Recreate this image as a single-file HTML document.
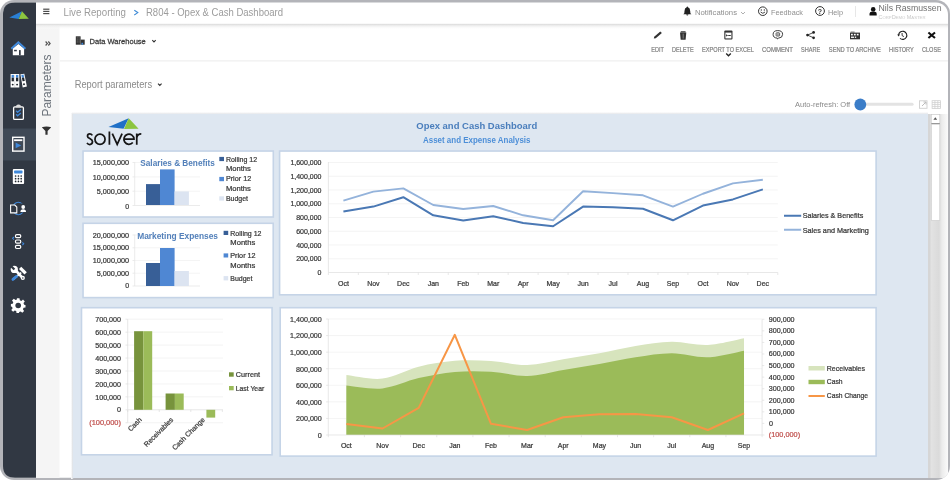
<!DOCTYPE html>
<html><head><meta charset="utf-8">
<style>
html,body{margin:0;padding:0;width:950px;height:480px;overflow:hidden;background:#fff;}
svg{display:block;font-family:"Liberation Sans",sans-serif;will-change:transform;}
</style></head>
<body>
<svg width="950" height="480" viewBox="0 0 950 480">
<defs>
  <clipPath id="frame"><rect x="0" y="0" width="950" height="480" rx="14" ry="14"/></clipPath>
  <linearGradient id="hdrsh" x1="0" y1="0" x2="0" y2="1">
    <stop offset="0" stop-color="#dadada"/><stop offset="0.25" stop-color="#ececec"/><stop offset="1" stop-color="#ffffff" stop-opacity="0"/>
  </linearGradient>
  <linearGradient id="sbg" x1="0" y1="0" x2="1" y2="0">
    <stop offset="0" stop-color="#e6e6e6"/><stop offset="0.55" stop-color="#dadada"/><stop offset="0.7" stop-color="#ececec"/><stop offset="1" stop-color="#fafafa"/>
  </linearGradient>
  <linearGradient id="shl" x1="0" y1="0" x2="1" y2="0">
    <stop offset="0" stop-color="#ffffff"/><stop offset="1" stop-color="#d5d9de"/>
  </linearGradient>
  <linearGradient id="sht" x1="0" y1="0" x2="0" y2="1">
    <stop offset="0" stop-color="#ffffff"/><stop offset="1" stop-color="#e3e5e8"/>
  </linearGradient>
  <linearGradient id="hdrup" x1="0" y1="0" x2="0" y2="1">
    <stop offset="0" stop-color="#ffffff" stop-opacity="0"/><stop offset="1" stop-color="#ececec"/>
  </linearGradient>
</defs>
<g clip-path="url(#frame)">
  <!-- frame bg -->
  <rect x="0" y="0" width="950" height="480" fill="#b3b4b9"/>
  <rect x="3" y="2.5" width="945" height="475.2" rx="12" ry="12" fill="#ffffff"/>
  <!-- sidebar -->
  <path d="M3 14.5 Q3 2.5 15 2.5 L36 2.5 L36 477.7 L15 477.7 Q3 477.7 3 465.7 Z" fill="#313843"/>
  <rect x="3" y="128.5" width="33" height="32" fill="#3f4956"/>

  <!-- params panel -->
  <rect x="36" y="24" width="23.5" height="454" fill="#f5f5f5"/>
  <!-- sidebar icons -->
  <path d="M9.3 17.4 L22 11.2 L18.7 18.9 Z" fill="#2a7fd4"/>
  <path d="M22 11.2 L28.8 18.8 L18.7 18.9 Z" fill="#8cc63f"/>
  <!-- home -->
  <path d="M12.8 48.6 L18.35 44 L24.1 48.6 L24.1 55.2 L12.8 55.2 Z" fill="#ffffff"/>
  <path d="M11.3 48.8 L18.35 42.2 L25.4 48.8" fill="none" stroke="#3f88da" stroke-width="1.9"/>
  <rect x="14.1" y="49.8" width="2.7" height="1.5" fill="#313843"/>
  <rect x="19" y="50.1" width="1.7" height="5.1" fill="#313843"/>
  <!-- binders -->
  <g>
    <rect x="10.6" y="74" width="8.7" height="13.5" fill="#ffffff"/>
    <rect x="14.75" y="75" width="0.35" height="12" fill="#9aa0a6"/>
    <path d="M20.4 74.3 L24.3 73.8 L26.9 86.6 L22.7 87.4 Z" fill="#ffffff"/>
    <rect x="11.6" y="74.9" width="2.3" height="2.8" fill="#3f88da"/>
    <rect x="16" y="74.9" width="2.3" height="2.8" fill="#3f88da"/>
    <path d="M21.3 74.9 L23.5 74.6 L24.1 77.4 L21.9 77.7 Z" fill="#3f88da"/>
    <rect x="11.6" y="77.7" width="2.3" height="3.6" fill="#1f252d"/>
    <rect x="16" y="77.7" width="2.3" height="3.6" fill="#1f252d"/>
    <path d="M21.9 77.7 L24.1 77.4 L24.8 80.9 L22.6 81.2 Z" fill="#1f252d"/>
    <circle cx="12.7" cy="84.6" r="0.95" fill="#1f252d"/>
    <circle cx="17.1" cy="84.6" r="0.95" fill="#1f252d"/>
    <circle cx="24" cy="84.2" r="0.95" fill="#1f252d"/>
  </g>
  <!-- clipboard -->
  <rect x="13.6" y="106.8" width="9.8" height="12.6" rx="1.2" fill="none" stroke="#ffffff" stroke-width="1.3"/>
  <path d="M15.6 107.6 Q15.6 105 18.5 104.6 Q21.4 105 21.4 107.6 Z" fill="#dddddd"/>
  <path d="M16.2 110.8 L17.6 112.3 L20.8 109.4 M16.2 114.3 L17.6 115.8 L20.8 112.9" fill="none" stroke="#3f88da" stroke-width="1.3"/>
  <!-- report -->
  <rect x="12.7" y="137.3" width="11.3" height="13.8" fill="none" stroke="#ffffff" stroke-width="1.4"/>
  <rect x="14.1" y="139.3" width="8.2" height="1.8" fill="#ffffff"/>
  <path d="M15.6 142.6 L21.2 145.4 L15.6 148.3 Z" fill="#3f88da"/>
  <!-- calculator -->
  <rect x="12.8" y="169" width="11.3" height="15.1" rx="1" fill="#ffffff"/>
  <rect x="14.1" y="170.6" width="8.4" height="2.8" rx="0.6" fill="#3f88da"/>
  <g fill="#222830">
    <circle cx="15.6" cy="176" r="0.85"/><circle cx="18.45" cy="176" r="0.85"/><circle cx="21.2" cy="176" r="0.85"/>
    <circle cx="15.6" cy="178.7" r="0.85"/><circle cx="18.45" cy="178.7" r="0.85"/><circle cx="21.2" cy="178.7" r="0.85"/>
    <circle cx="15.6" cy="181.4" r="0.85"/><circle cx="18.45" cy="181.4" r="0.85"/><circle cx="21.2" cy="181.4" r="0.85"/>
  </g>
  <!-- doc + person -->
  <ellipse cx="18.3" cy="208.5" rx="5.6" ry="6.3" fill="none" stroke="#3f88da" stroke-width="1.1"/>
  <path d="M10.6 205 L14.8 205 L16.8 207 L16.8 212.9 L10.6 212.9 Z" fill="#313843" stroke="#ffffff" stroke-width="1.1"/>
  <rect x="19.6" y="203.5" width="7" height="9" fill="#313843"/>
  <circle cx="23.2" cy="207" r="1.9" fill="#ffffff"/>
  <path d="M20.4 212 Q20.4 209.3 23.2 209.3 Q26 209.3 26 212 Z" fill="#ffffff"/>
  <!-- hierarchy -->
  <g fill="none" stroke="#ffffff" stroke-width="1.2">
    <rect x="15.5" y="234.6" width="5.2" height="3.1" rx="1.2"/>
    <rect x="15.5" y="240" width="5.2" height="3.1" rx="1.2"/>
    <rect x="15.5" y="245.4" width="5.2" height="3.1" rx="1.2"/>
  </g>
  <path d="M13.9 237 L12.6 238.3 L13.9 239.6" fill="none" stroke="#3f88da" stroke-width="1.1"/>
  <path d="M22.4 242.4 L23.7 243.7 L22.4 245" fill="none" stroke="#3f88da" stroke-width="1.1"/>
  <!-- tools -->
  <path d="M21.2 272.6 L13.6 279" stroke="#ffffff" stroke-width="1.8"/>
  <path d="M16.6 276.4 L12.9 279.4" stroke="#3f88da" stroke-width="2.8" stroke-linecap="round"/>
  <rect x="-3.9" y="-1.6" width="7.8" height="3.2" fill="#ffffff" transform="translate(22.9 270.6) rotate(45)"/>
  <path d="M16.2 271 L22.6 277.8" stroke="#ffffff" stroke-width="2.6" stroke-linecap="round"/>
  <circle cx="22.8" cy="277.9" r="2.1" fill="#ffffff"/>
  <circle cx="22.8" cy="277.9" r="0.75" fill="#313843"/>
  <circle cx="14.3" cy="269.4" r="3.6" fill="#ffffff"/>
  <rect x="-1.1" y="-2.6" width="2.2" height="5.2" fill="#313843" transform="translate(12.6 267.7) rotate(-45)"/>
  <!-- gear -->
  <g transform="translate(18.2 305.5)">
    <path id="gear" d="M-1.3 -7.3 L1.3 -7.3 L1.6 -5.3 L3.2 -4.6 L4.8 -5.9 L6.6 -4 L5.3 -2.4 L5.9 -0.8 L7.3 -0.6 L7.3 1.9 L5.4 2.3 L4.7 3.8 L5.9 5.4 L4.1 7.2 L2.5 5.9 L1 6.5 L0.8 7.6 L-1.7 7.6 L-2 5.6 L-3.5 5 L-5.1 6.2 L-6.9 4.4 L-5.6 2.8 L-6.2 1.2 L-7.3 1.1 L-7.3 -1.4 L-5.5 -1.7 L-4.9 -3.2 L-6.2 -4.9 L-4.4 -6.7 L-2.7 -5.4 L-1.3 -5.9 Z" fill="#ffffff"/>
    <circle cx="0" cy="0" r="2.8" fill="#313843"/>
  </g>

  <!-- params panel text -->
  <path d="M45.6 41.5 L47.4 43.5 L45.6 45.5 M48.3 41.5 L50.1 43.5 L48.3 45.5" fill="none" stroke="#555" stroke-width="1.2"/>
  <text transform="translate(51.2 116.6) rotate(-90)" font-size="12" fill="#6d747c" textLength="62" lengthAdjust="spacingAndGlyphs">Parameters</text>
  <path d="M41.8 127.2 Q46.5 125.6 51.2 127.2 L47.6 131 L47.6 134.7 L45.4 134.7 L45.4 131 Z" fill="#333"/>

  <!-- header shadow -->
  <rect x="36" y="22.6" width="912" height="1.6" fill="url(#hdrup)"/>
  <rect x="36" y="24" width="912" height="5.8" fill="url(#hdrsh)"/>

  <!-- header content -->
  <g fill="#4a4a4a">
    <rect x="43.2" y="8.6" width="6.2" height="1.2"/>
    <rect x="43.2" y="10.8" width="6.2" height="1.2"/>
    <rect x="43.2" y="13" width="6.2" height="1.2"/>
  </g>
  <text x="63.5" y="16" font-size="10.8" fill="#9c9c9c" textLength="62.5" lengthAdjust="spacingAndGlyphs">Live Reporting</text>
  <path d="M134.3 10.2 L137.8 12.6 L134.3 15" fill="none" stroke="#3d8ad6" stroke-width="1.1"/>
  <text x="146" y="16" font-size="10.8" fill="#9c9c9c" textLength="137" lengthAdjust="spacingAndGlyphs">R804 - Opex &amp; Cash Dashboard</text>
  <!-- bell -->
  <path d="M687.3 6.4 Q688 6.4 688 7.3 Q690.2 8 690.2 11 L690.4 13.2 L691.4 14.2 L683.3 14.2 L684.3 13.2 L684.5 11 Q684.5 8 686.7 7.3 Q686.7 6.4 687.3 6.4 Z M686.2 14.6 L688.4 14.6 Q688.2 15.6 687.3 15.6 Q686.4 15.6 686.2 14.6 Z" fill="#222"/>
  <text x="695" y="14.6" font-size="7.9" fill="#8e8e8e" textLength="42" lengthAdjust="spacingAndGlyphs">Notifications</text>
  <path d="M741 12 L743 14 L745 12" fill="none" stroke="#9a9a9a" stroke-width="0.8"/>
  <!-- smiley -->
  <circle cx="762.8" cy="11.2" r="4.3" fill="none" stroke="#333" stroke-width="1"/>
  <circle cx="761.3" cy="10" r="0.65" fill="#333"/><circle cx="764.3" cy="10" r="0.65" fill="#333"/>
  <path d="M760.6 12 Q762.8 14.6 765 12" fill="none" stroke="#333" stroke-width="0.9"/>
  <text x="771" y="14.6" font-size="7.9" fill="#8e8e8e" textLength="32" lengthAdjust="spacingAndGlyphs">Feedback</text>
  <!-- help -->
  <circle cx="820" cy="11" r="4.4" fill="none" stroke="#333" stroke-width="1"/>
  <text x="820" y="13.6" font-size="7" font-weight="bold" fill="#333" text-anchor="middle">?</text>
  <text x="828" y="14.6" font-size="7.9" fill="#8e8e8e" textLength="15" lengthAdjust="spacingAndGlyphs">Help</text>
  <rect x="855.2" y="6" width="0.8" height="11" fill="#e2e2e2"/>
  <!-- person -->
  <circle cx="873.2" cy="9.4" r="2.3" fill="#111"/>
  <path d="M869.5 15.6 L869.5 13.8 Q869.6 11.8 871.6 11.8 L874.8 11.8 Q876.7 11.8 876.7 13.8 L876.7 15.6 Z" fill="#111"/>
  <text x="878.5" y="10.9" font-size="8.6" fill="#707070" textLength="63" lengthAdjust="spacingAndGlyphs">Nils Rasmussen</text>
  <text x="878.5" y="19.4" font-size="5.2" fill="#c9c9c9" textLength="47" lengthAdjust="spacingAndGlyphs">C<tspan font-size="4">ORP</tspan>D<tspan font-size="4">EMO</tspan> M<tspan font-size="4">ASTER</tspan></text>

  <!-- toolbar left -->
  <rect x="75.8" y="36.3" width="4.8" height="8.4" fill="#333"/>
  <rect x="80.6" y="39.6" width="4.1" height="5.1" fill="#333"/>
  <g fill="#777"><rect x="76.7" y="37.5" width="1.2" height="0.9"/><rect x="78.5" y="37.5" width="1.2" height="0.9"/><rect x="76.7" y="39.5" width="1.2" height="0.9"/><rect x="78.5" y="39.5" width="1.2" height="0.9"/><rect x="76.7" y="41.5" width="1.2" height="0.9"/><rect x="78.5" y="41.5" width="1.2" height="0.9"/></g>
  <rect x="81.5" y="42.8" width="1.6" height="1.9" fill="#3f88da"/>
  <text x="89.5" y="43.7" font-size="7.9" fill="#3d3d3d" stroke="#3d3d3d" stroke-width="0.28" textLength="56.3" lengthAdjust="spacingAndGlyphs">Data Warehouse</text>
  <path d="M152.3 40.2 L154 41.9 L155.7 40.2" fill="none" stroke="#333" stroke-width="1.1"/>
  <text x="74.7" y="87.7" font-size="10.1" fill="#8a8a8a" textLength="77.4" lengthAdjust="spacingAndGlyphs">Report parameters</text>
  <path d="M158 83.6 L159.8 85.4 L161.6 83.6" fill="none" stroke="#333" stroke-width="1.1"/>
  <!-- toolbar right icons -->
  <path d="M653.8 38.6 L654.2 36.8 L660.3 31.6 L661.9 33.1 L655.8 38.3 Z" fill="#333"/>
  <path d="M680 32.4 L686.3 32.4 L685.6 39.7 L680.7 39.7 Z" fill="#333"/>
  <rect x="680.6" y="31.3" width="5.1" height="1.2" rx="0.5" fill="#333"/>
  <rect x="682.7" y="33.6" width="0.9" height="5" fill="#888"/>
  <rect x="724.3" y="30.4" width="8.2" height="9" rx="1" fill="#333"/>
  <rect x="725.4" y="32.6" width="6" height="5.8" fill="#fff"/>
  <path d="M726.1 34.2 L728 35.4 L726.1 36.6 Z" fill="#222"/>
  <rect x="728.2" y="35" width="2.6" height="0.9" fill="#222"/>
  <path d="M726.2 53.5 L728.5 55.8 L730.8 53.5" fill="none" stroke="#222" stroke-width="1.3"/>
  <!-- comment -->
  <path d="M777.8 30.6 Q782.6 30.6 782.6 34.4 Q782.6 37.9 778.6 38.1 L777.6 39 L777.2 38.1 Q773.1 37.9 773.1 34.4 Q773.1 30.6 777.8 30.6 Z" fill="none" stroke="#333" stroke-width="0.95"/>
  <rect x="776.1" y="32.8" width="3.5" height="3.2" rx="0.6" fill="none" stroke="#333" stroke-width="0.8"/>
  <path d="M776.9 34 H778.8 M776.9 34.9 H778.8" stroke="#333" stroke-width="0.5"/>
  <!-- share -->
  <path d="M813.6 32.4 L807.5 35.1 L813.6 37.8" fill="none" stroke="#222" stroke-width="0.8"/>
  <circle cx="813.6" cy="32.4" r="1.35" fill="#222"/><circle cx="807.5" cy="35.1" r="1.35" fill="#222"/><circle cx="813.6" cy="37.8" r="1.35" fill="#222"/>
  <!-- archive -->
  <rect x="850" y="32.6" width="10" height="6.7" fill="#333"/>
  <g fill="#fff"><rect x="851" y="33.8" width="1.8" height="1.6"/><rect x="853.9" y="33.8" width="1.8" height="1.6"/><rect x="856.8" y="33.8" width="1.8" height="1.6"/><rect x="851" y="36.6" width="3.2" height="1.3"/><rect x="855" y="36.6" width="1.2" height="1.3"/></g>
  <rect x="850.6" y="31.7" width="4" height="0.7" fill="#333"/>
  <!-- history -->
  <path d="M898.6 35.2 A4.1 4.1 0 1 1 900 38.4" fill="none" stroke="#222" stroke-width="1.1"/>
  <path d="M897.2 34.4 L900 34.4 L898.6 36.5 Z" fill="#222"/>
  <path d="M902.1 33 L902.1 35.6 L903.9 36.6" fill="none" stroke="#222" stroke-width="0.9"/>
  <!-- close -->
  <path d="M928.4 32.5 L935 38 M935 32.5 L928.4 38" stroke="#111" stroke-width="2.1"/>
  <!-- toolbar labels -->
  <g font-size="7.1" fill="#808080" stroke="#808080" stroke-width="0.2">
    <text x="651.3" y="51.8" textLength="12.7" lengthAdjust="spacingAndGlyphs">EDIT</text>
    <text x="672" y="51.8" textLength="21.7" lengthAdjust="spacingAndGlyphs">DELETE</text>
    <text x="702.1" y="51.8" textLength="51.8" lengthAdjust="spacingAndGlyphs">EXPORT TO EXCEL</text>
    <text x="762" y="51.8" textLength="31" lengthAdjust="spacingAndGlyphs">COMMENT</text>
    <text x="801.1" y="51.8" textLength="19.2" lengthAdjust="spacingAndGlyphs">SHARE</text>
    <text x="828.8" y="51.8" textLength="52.1" lengthAdjust="spacingAndGlyphs">SEND TO ARCHIVE</text>
    <text x="889.1" y="51.8" textLength="24.7" lengthAdjust="spacingAndGlyphs">HISTORY</text>
    <text x="922" y="51.8" textLength="18.9" lengthAdjust="spacingAndGlyphs">CLOSE</text>
  </g>
  <!-- auto refresh -->
  <text x="795" y="107" font-size="7.5" fill="#8a8a8a" textLength="55.2" lengthAdjust="spacingAndGlyphs">Auto-refresh: Off</text>
  <rect x="862" y="102.8" width="51.6" height="3" rx="1.5" fill="#e3e3e3"/>
  <circle cx="860.3" cy="104.5" r="5.9" fill="#3b7dc8"/>
  <rect x="919.5" y="100.8" width="7.5" height="7.5" fill="none" stroke="#cfcfcf" stroke-width="0.9"/>
  <path d="M922 106 L926 102 M923.5 102 L926 102 L926 104.5" fill="none" stroke="#bdbdbd" stroke-width="1"/>
  <g fill="none" stroke="#cfcfcf" stroke-width="0.8">
    <rect x="932.1" y="100.7" width="8.5" height="7.8"/>
    <path d="M932.1 102.6 H940.6 M932.1 104.6 H940.6 M932.1 106.6 H940.6 M934.9 100.7 V108.5 M937.8 100.7 V108.5"/>
  </g>
  <!-- toolbar separator -->
  <rect x="60" y="60.4" width="888" height="1" fill="#ebebeb"/>
  <!-- report area -->
  <rect x="71" y="113" width="2.2" height="366" fill="url(#shl)"/>
  <rect x="72" y="112" width="856" height="2.1" fill="url(#sht)"/>
  <rect x="73" y="114" width="855" height="364" fill="#dee7f1"/>
  <!-- scrollbar -->
  <rect x="928" y="114" width="20" height="364" fill="url(#sbg)"/>
  <rect x="928" y="114" width="2.5" height="364" fill="#d6d6d6"/>
  <rect x="931.3" y="114.4" width="8.5" height="9.3" fill="#ffffff" stroke="#c4c4c4" stroke-width="0.5"/>
  <rect x="931.3" y="123.1" width="8.5" height="1.1" fill="#8a8a8a"/>
  <path d="M933.4 119.8 L935.3 117.3 L937.2 119.8 Z" fill="#555"/>
  <rect x="931.3" y="124.2" width="8.5" height="96.3" fill="#ffffff" stroke="#c8c8c8" stroke-width="0.6"/>
  <!-- boxes -->
  <g fill="#ffffff" stroke="#c5d4e7" stroke-width="1.6">
    <rect x="83.05" y="151.05" width="190.25" height="65.95"/>
    <rect x="83.05" y="223.3" width="190.15" height="74.3"/>
    <rect x="279.6" y="151.05" width="596.5" height="143.75"/>
    <rect x="81.5" y="307.7" width="190.55" height="147.1"/>
    <rect x="280.2" y="307.7" width="595.9" height="148.4"/>
  </g>

  <!-- report header -->
  <path d="M108.5 127 L128.7 118.2 L123.6 128.7 Z" fill="#1f70c7"/>
  <path d="M128.7 118.2 L138.6 128.8 L124 129 Z" fill="#8cc53f"/>
  <g fill="none" stroke="#161616" stroke-width="1.75">
    <path d="M92.3 135.4 C91.6 134.3 90.8 133.9 89.8 133.9 C88.3 133.9 87.5 134.9 87.5 136.2 C87.5 138.7 92.5 138.5 92.5 141.6 C92.5 143.4 91.4 144.5 89.7 144.5 C88.5 144.5 87.6 143.9 87 142.9"/>
    <circle cx="100" cy="139.2" r="5.05"/>
    <path d="M109.4 131.4 V144.7"/>
    <path d="M112.3 133.6 L117.2 144.4 L122.1 133.6"/>
    <path d="M123.9 139.2 H134 A5.05 5.05 0 1 0 132.8 142.5"/>
    <path d="M136.75 133.6 V144.7 M136.75 137.8 C137.2 135.1 138.8 133.9 141.3 133.9"/>
  </g>
  <text x="416.3" y="128.5" font-size="9.9" font-weight="bold" fill="#4a7ebc" textLength="121" lengthAdjust="spacingAndGlyphs">Opex and Cash Dashboard</text>
  <text x="423" y="142.8" font-size="8.6" font-weight="bold" fill="#4d8fd8" textLength="107.5" lengthAdjust="spacingAndGlyphs">Asset and Expense Analysis</text>

  <!-- chart 1 -->
  <g stroke="#efefef" stroke-width="0.7">
    <path d="M135 162.5 H200 M135 176.9 H200 M135 191.2 H200"/>
  </g>
  <path d="M134.7 162 V205.5 M132.5 162.5 H134.7 M132.5 176.9 H134.7 M132.5 191.2 H134.7 M132.5 205.5 H200" stroke="#e2e2e2" stroke-width="0.7" fill="none"/>
  <g font-size="7" fill="#383838" stroke="#383838" stroke-width="0.22" text-anchor="end">
    <text x="129.1" y="165.1" textLength="36.4" lengthAdjust="spacingAndGlyphs">15,000,000</text>
    <text x="129.1" y="179.7" textLength="36.4" lengthAdjust="spacingAndGlyphs">10,000,000</text>
    <text x="129.1" y="194" textLength="32.4" lengthAdjust="spacingAndGlyphs">5,000,000</text>
    <text x="129.1" y="208.7">0</text>
  </g>
  <rect x="146" y="184.1" width="14" height="20.9" fill="#385f97"/>
  <rect x="160" y="169.4" width="14.6" height="35.6" fill="#4f87d3"/>
  <rect x="174.6" y="191.4" width="14.3" height="13.6" fill="#dce4f1"/>
  <text x="140.3" y="166.3" font-size="8.6" font-weight="bold" fill="#5380ba" textLength="74.5" lengthAdjust="spacingAndGlyphs">Salaries &amp; Benefits</text>
  <rect x="219.3" y="156.9" width="4.7" height="4.2" fill="#385f97"/>
  <rect x="219.3" y="176.9" width="4.7" height="4.3" fill="#4f87d3"/>
  <rect x="219.3" y="196.3" width="4.7" height="4.3" fill="#dce4f1"/>
  <g font-size="6.9" fill="#383838" stroke="#383838" stroke-width="0.22">
    <text x="225.9" y="161.9" textLength="31.2" lengthAdjust="spacingAndGlyphs">Rolling 12</text>
    <text x="225.9" y="171" textLength="25" lengthAdjust="spacingAndGlyphs">Months</text>
    <text x="225.9" y="181.3" textLength="25.3" lengthAdjust="spacingAndGlyphs">Prior 12</text>
    <text x="225.9" y="190.6" textLength="25" lengthAdjust="spacingAndGlyphs">Months</text>
    <text x="225.9" y="201.3" textLength="22.1" lengthAdjust="spacingAndGlyphs">Budget</text>
  </g>

  <!-- chart 2 -->
  <g stroke="#efefef" stroke-width="0.7">
    <path d="M135 235 H200 M135 247.8 H200 M135 260.5 H200 M135 273.2 H200"/>
  </g>
  <path d="M134.7 234.5 V286 M132.5 235 H134.7 M132.5 247.8 H134.7 M132.5 260.5 H134.7 M132.5 273.2 H134.7 M132.5 286 H200" stroke="#e2e2e2" stroke-width="0.7" fill="none"/>
  <g font-size="7" fill="#383838" stroke="#383838" stroke-width="0.22" text-anchor="end">
    <text x="129.1" y="237.6" textLength="36.4" lengthAdjust="spacingAndGlyphs">20,000,000</text>
    <text x="129.1" y="250.4" textLength="36.4" lengthAdjust="spacingAndGlyphs">15,000,000</text>
    <text x="129.1" y="263.1" textLength="36.4" lengthAdjust="spacingAndGlyphs">10,000,000</text>
    <text x="129.1" y="275.9" textLength="32.4" lengthAdjust="spacingAndGlyphs">5,000,000</text>
    <text x="129.1" y="288.3">0</text>
  </g>
  <rect x="146" y="263" width="14" height="23" fill="#385f97"/>
  <rect x="160" y="248" width="14.6" height="38" fill="#4f87d3"/>
  <rect x="174.6" y="271" width="14.3" height="15" fill="#dce4f1"/>
  <text x="137.2" y="239.2" font-size="8.6" font-weight="bold" fill="#5380ba" textLength="80.8" lengthAdjust="spacingAndGlyphs">Marketing Expenses</text>
  <rect x="223.6" y="230.8" width="4.6" height="4.2" fill="#385f97"/>
  <rect x="223.6" y="253.4" width="4.6" height="4.1" fill="#4f87d3"/>
  <rect x="223.6" y="276.1" width="4.6" height="4.3" fill="#dce4f1"/>
  <g font-size="6.9" fill="#383838" stroke="#383838" stroke-width="0.22">
    <text x="230.3" y="235.5" textLength="31.2" lengthAdjust="spacingAndGlyphs">Rolling 12</text>
    <text x="230.3" y="244.7" textLength="25" lengthAdjust="spacingAndGlyphs">Months</text>
    <text x="230.3" y="258.1" textLength="25.3" lengthAdjust="spacingAndGlyphs">Prior 12</text>
    <text x="230.3" y="267.6" textLength="25" lengthAdjust="spacingAndGlyphs">Months</text>
    <text x="230.3" y="280.8" textLength="22.1" lengthAdjust="spacingAndGlyphs">Budget</text>
  </g>
  <!-- chart 3 -->
  <path d="M328.4 258.75 H777.8 M328.4 245.00 H777.8 M328.4 231.25 H777.8 M328.4 217.50 H777.8 M328.4 203.75 H777.8 M328.4 190.00 H777.8 M328.4 176.25 H777.8 M328.4 162.50 H777.8" stroke="#efefef" stroke-width="0.7" fill="none"/>
  <path d="M328.4 162 V272.5 H777.8 M328.40 272.5 V275 M358.36 272.5 V275 M388.32 272.5 V275 M418.28 272.5 V275 M448.24 272.5 V275 M478.20 272.5 V275 M508.16 272.5 V275 M538.12 272.5 V275 M568.08 272.5 V275 M598.04 272.5 V275 M628.00 272.5 V275 M657.96 272.5 V275 M687.92 272.5 V275 M717.88 272.5 V275 M747.84 272.5 V275 M777.80 272.5 V275" stroke="#dedede" stroke-width="0.7" fill="none"/>
  <g font-size="7.1" fill="#383838" stroke="#383838" stroke-width="0.22" text-anchor="end">
    <text x="321.5" y="275.00" textLength="3.9" lengthAdjust="spacingAndGlyphs">0</text>
    <text x="321.5" y="261.25" textLength="25.3" lengthAdjust="spacingAndGlyphs">200,000</text>
    <text x="321.5" y="247.50" textLength="25.3" lengthAdjust="spacingAndGlyphs">400,000</text>
    <text x="321.5" y="233.75" textLength="25.3" lengthAdjust="spacingAndGlyphs">600,000</text>
    <text x="321.5" y="220.00" textLength="25.3" lengthAdjust="spacingAndGlyphs">800,000</text>
    <text x="321.5" y="206.25" textLength="31.1" lengthAdjust="spacingAndGlyphs">1,000,000</text>
    <text x="321.5" y="192.50" textLength="31.1" lengthAdjust="spacingAndGlyphs">1,200,000</text>
    <text x="321.5" y="178.75" textLength="31.1" lengthAdjust="spacingAndGlyphs">1,400,000</text>
    <text x="321.5" y="165.00" textLength="31.1" lengthAdjust="spacingAndGlyphs">1,600,000</text>
  </g>
  <g font-size="7" fill="#383838" stroke="#383838" stroke-width="0.22" text-anchor="middle">
    <text x="343.40" y="285.8">Oct</text>
    <text x="373.36" y="285.8">Nov</text>
    <text x="403.32" y="285.8">Dec</text>
    <text x="433.28" y="285.8">Jan</text>
    <text x="463.24" y="285.8">Feb</text>
    <text x="493.20" y="285.8">Mar</text>
    <text x="523.16" y="285.8">Apr</text>
    <text x="553.12" y="285.8">May</text>
    <text x="583.08" y="285.8">Jun</text>
    <text x="613.04" y="285.8">Jul</text>
    <text x="643.00" y="285.8">Aug</text>
    <text x="672.96" y="285.8">Sep</text>
    <text x="702.92" y="285.8">Oct</text>
    <text x="732.88" y="285.8">Nov</text>
    <text x="762.84" y="285.8">Dec</text>
  </g>
  <polyline points="343.40,200.6 373.36,191.6 403.32,188.4 433.28,205 463.24,209 493.20,206 523.16,215.3 553.12,220.3 583.08,191.25 613.04,193.1 643.00,195.3 672.96,206.6 702.92,193.75 732.88,183.4 762.84,179.7" fill="none" stroke="#94b3db" stroke-width="1.9" stroke-linejoin="round"/>
  <polyline points="343.40,211.6 373.36,206.6 403.32,197.2 433.28,215.3 463.24,220.6 493.20,216.25 523.16,223 553.12,226.25 583.08,206.6 613.04,207.2 643.00,208.75 672.96,220.3 702.92,205.6 732.88,199.4 762.84,189.4" fill="none" stroke="#4a78b4" stroke-width="2" stroke-linejoin="round"/>
  <path d="M784 215.8 H801.2" stroke="#4a78b4" stroke-width="2"/>
  <path d="M784 229.7 H801.2" stroke="#94b3db" stroke-width="1.9"/>
  <g font-size="7" fill="#383838" stroke="#383838" stroke-width="0.22">
    <text x="802.7" y="218.3" textLength="60.6" lengthAdjust="spacingAndGlyphs">Salaries &amp; Benefits</text>
    <text x="802.7" y="232.5" textLength="66.2" lengthAdjust="spacingAndGlyphs">Sales and Marketing</text>
  </g>
  <!-- chart 4 -->
  <path d="M127.7 422.74 H223 M127.7 396.86 H223 M127.7 383.92 H223 M127.7 370.98 H223 M127.7 358.04 H223 M127.7 345.10 H223 M127.7 332.16 H223 M127.7 319.22 H223" stroke="#efefef" stroke-width="0.7" fill="none"/>
  <path d="M127.7 319.22 V422.74 M127.7 409.8 H223 M125.5 422.74 H127.7 M125.5 409.80 H127.7 M125.5 396.86 H127.7 M125.5 383.92 H127.7 M125.5 370.98 H127.7 M125.5 358.04 H127.7 M125.5 345.10 H127.7 M125.5 332.16 H127.7 M125.5 319.22 H127.7 M127.70 409.8 V412.0 M159.25 409.8 V412.0 M190.80 409.8 V412.0 M222.35 409.8 V412.0" stroke="#dedede" stroke-width="0.7" fill="none"/>
  <g font-size="7.2" fill="#383838" stroke="#383838" stroke-width="0.22" text-anchor="end">
    <text x="121" y="412.3">0</text>
    <text x="121" y="399.5" textLength="25.8" lengthAdjust="spacingAndGlyphs">100,000</text>
    <text x="121" y="386.5" textLength="25.8" lengthAdjust="spacingAndGlyphs">200,000</text>
    <text x="121" y="373.6" textLength="25.8" lengthAdjust="spacingAndGlyphs">300,000</text>
    <text x="121" y="360.6" textLength="25.8" lengthAdjust="spacingAndGlyphs">400,000</text>
    <text x="121" y="347.5" textLength="25.8" lengthAdjust="spacingAndGlyphs">500,000</text>
    <text x="121" y="334.5" textLength="25.8" lengthAdjust="spacingAndGlyphs">600,000</text>
    <text x="121" y="321.5" textLength="25.8" lengthAdjust="spacingAndGlyphs">700,000</text>
    <text x="121" y="424.9" fill="#c0504d" stroke="#c0504d" textLength="31.8" lengthAdjust="spacingAndGlyphs">(100,000)</text>
  </g>
  <rect x="134.1" y="331.2" width="9.2" height="78.6" fill="#77933c"/>
  <rect x="143.3" y="331.2" width="8.9" height="78.6" fill="#9bbb59"/>
  <rect x="165.6" y="393.5" width="9.3" height="16.3" fill="#77933c"/>
  <rect x="174.9" y="393.5" width="8.8" height="16.3" fill="#9bbb59"/>
  <rect x="206.4" y="409.8" width="8.8" height="7.8" fill="#9bbb59"/>
  <rect x="229" y="372.3" width="4.7" height="4.4" fill="#77933c"/>
  <rect x="229" y="386" width="4.7" height="4.3" fill="#9bbb59"/>
  <g font-size="7" fill="#383838" stroke="#383838" stroke-width="0.22">
    <text x="235.8" y="376.7" textLength="24.2" lengthAdjust="spacingAndGlyphs">Current</text>
    <text x="235.8" y="390.8" textLength="28.4" lengthAdjust="spacingAndGlyphs">Last Year</text>
    <text transform="translate(142.2 420.2) rotate(-45)" text-anchor="end">Cash</text>
    <text transform="translate(173.8 420.2) rotate(-45)" text-anchor="end">Receivables</text>
    <text transform="translate(205.2 420.2) rotate(-45)" text-anchor="end">Cash Change</text>
  </g>
  <!-- chart 5 -->
  <path d="M328.3 418.43 H762 M328.3 401.86 H762 M328.3 385.29 H762 M328.3 368.72 H762 M328.3 352.15 H762 M328.3 335.58 H762 M328.3 319.01 H762" stroke="#efefef" stroke-width="0.7" fill="none"/>
  <path d="M346.38 375.10 C352.40 375.68 370.47 380.00 382.52 378.60 C394.57 377.20 406.62 369.67 418.68 366.70 C430.73 363.73 442.77 361.75 454.82 360.80 C466.88 359.85 478.93 360.30 490.98 361.00 C503.03 361.70 515.08 365.28 527.12 365.00 C539.17 364.72 551.23 361.25 563.27 359.30 C575.32 357.35 587.38 355.52 599.42 353.30 C611.47 351.08 623.53 347.93 635.58 346.00 C647.62 344.07 659.68 341.87 671.73 341.70 C683.77 341.53 695.83 345.57 707.88 345.00 C719.92 344.43 738.00 339.42 744.02 338.30 L744.02 435.0 L346.38 435.0 Z" fill="#d7e4bd"/>
  <path d="M346.38 385.50 C352.40 385.98 370.47 389.63 382.52 388.40 C394.57 387.17 406.62 380.85 418.68 378.10 C430.73 375.35 442.77 372.97 454.82 371.90 C466.88 370.83 478.93 371.02 490.98 371.70 C503.03 372.38 515.08 376.28 527.12 376.00 C539.17 375.72 551.23 372.00 563.27 370.00 C575.32 368.00 587.38 366.12 599.42 364.00 C611.47 361.88 623.53 359.08 635.58 357.30 C647.62 355.52 659.68 353.30 671.73 353.30 C683.77 353.30 695.83 357.73 707.88 357.30 C719.92 356.87 738.00 351.80 744.02 350.70 L744.02 435.0 L346.38 435.0 Z" fill="#9bbb59"/>
  <path d="M328.3 319.01 V435.0 H762.1 M762.1 319.27 V435.0 M328.30 435.0 V437.2 M364.45 435.0 V437.2 M400.60 435.0 V437.2 M436.75 435.0 V437.2 M472.90 435.0 V437.2 M509.05 435.0 V437.2 M545.20 435.0 V437.2 M581.35 435.0 V437.2 M617.50 435.0 V437.2 M653.65 435.0 V437.2 M689.80 435.0 V437.2 M725.95 435.0 V437.2 M762.10 435.0 V437.2 M326.1 435.00 H328.3 M326.1 418.43 H328.3 M326.1 401.86 H328.3 M326.1 385.29 H328.3 M326.1 368.72 H328.3 M326.1 352.15 H328.3 M326.1 335.58 H328.3 M326.1 319.01 H328.3 M762.1 434.97 H764.3 M762.1 423.40 H764.3 M762.1 411.83 H764.3 M762.1 400.26 H764.3 M762.1 388.69 H764.3 M762.1 377.12 H764.3 M762.1 365.55 H764.3 M762.1 353.98 H764.3 M762.1 342.41 H764.3 M762.1 330.84 H764.3 M762.1 319.27 H764.3" stroke="#dedede" stroke-width="0.7" fill="none"/>
  <polyline points="346.38,424 382.52,428.5 418.68,407.9 454.82,334.8 490.98,423.8 527.12,430 563.27,417.3 599.42,414.3 635.58,414 671.73,417.3 707.88,430 744.02,413.3" fill="none" stroke="#f79646" stroke-width="2" stroke-linejoin="round"/>
  <g font-size="7.2" fill="#383838" stroke="#383838" stroke-width="0.22" text-anchor="end">
    <text x="321.8" y="437.90">0</text>
    <text x="321.8" y="421.33" textLength="25.8" lengthAdjust="spacingAndGlyphs">200,000</text>
    <text x="321.8" y="404.76" textLength="25.8" lengthAdjust="spacingAndGlyphs">400,000</text>
    <text x="321.8" y="388.19" textLength="25.8" lengthAdjust="spacingAndGlyphs">600,000</text>
    <text x="321.8" y="371.62" textLength="25.8" lengthAdjust="spacingAndGlyphs">800,000</text>
    <text x="321.8" y="355.05" textLength="31.7" lengthAdjust="spacingAndGlyphs">1,000,000</text>
    <text x="321.8" y="338.48" textLength="31.7" lengthAdjust="spacingAndGlyphs">1,200,000</text>
    <text x="321.8" y="321.91" textLength="31.7" lengthAdjust="spacingAndGlyphs">1,400,000</text>
  </g>
  <g font-size="7.2" fill="#383838" stroke="#383838" stroke-width="0.22">
    <text x="769" y="425.80">0</text>
    <text x="768.8" y="414.23" textLength="25.8" lengthAdjust="spacingAndGlyphs">100,000</text>
    <text x="768.8" y="402.66" textLength="25.8" lengthAdjust="spacingAndGlyphs">200,000</text>
    <text x="768.8" y="391.09" textLength="25.8" lengthAdjust="spacingAndGlyphs">300,000</text>
    <text x="768.8" y="379.52" textLength="25.8" lengthAdjust="spacingAndGlyphs">400,000</text>
    <text x="768.8" y="367.95" textLength="25.8" lengthAdjust="spacingAndGlyphs">500,000</text>
    <text x="768.8" y="356.38" textLength="25.8" lengthAdjust="spacingAndGlyphs">600,000</text>
    <text x="768.8" y="344.81" textLength="25.8" lengthAdjust="spacingAndGlyphs">700,000</text>
    <text x="768.8" y="333.24" textLength="25.8" lengthAdjust="spacingAndGlyphs">800,000</text>
    <text x="768.8" y="321.67" textLength="25.8" lengthAdjust="spacingAndGlyphs">900,000</text>
    <text x="768.8" y="437.3" fill="#c0504d" stroke="#c0504d" textLength="31.3" lengthAdjust="spacingAndGlyphs">(100,000)</text>
  </g>
  <g font-size="7" fill="#383838" stroke="#383838" stroke-width="0.22" text-anchor="middle">
    <text x="346.38" y="447.6">Oct</text>
    <text x="382.52" y="447.6">Nov</text>
    <text x="418.68" y="447.6">Dec</text>
    <text x="454.82" y="447.6">Jan</text>
    <text x="490.98" y="447.6">Feb</text>
    <text x="527.12" y="447.6">Mar</text>
    <text x="563.27" y="447.6">Apr</text>
    <text x="599.42" y="447.6">May</text>
    <text x="635.58" y="447.6">Jun</text>
    <text x="671.73" y="447.6">Jul</text>
    <text x="707.88" y="447.6">Aug</text>
    <text x="744.02" y="447.6">Sep</text>
  </g>
  <rect x="808.5" y="366" width="16.3" height="4.5" fill="#d7e4bd"/>
  <rect x="808.5" y="379.8" width="16.3" height="4.4" fill="#9bbb59"/>
  <path d="M808.5 396 H824.8" stroke="#f79646" stroke-width="1.9"/>
  <g font-size="7" fill="#383838" stroke="#383838" stroke-width="0.22">
    <text x="826.8" y="370.8" textLength="38.2" lengthAdjust="spacingAndGlyphs">Receivables</text>
    <text x="826.8" y="384.2" textLength="15.8" lengthAdjust="spacingAndGlyphs">Cash</text>
    <text x="826.8" y="398.2" textLength="41.2" lengthAdjust="spacingAndGlyphs">Cash Change</text>
  </g>
</g>
</svg>
</body></html>
